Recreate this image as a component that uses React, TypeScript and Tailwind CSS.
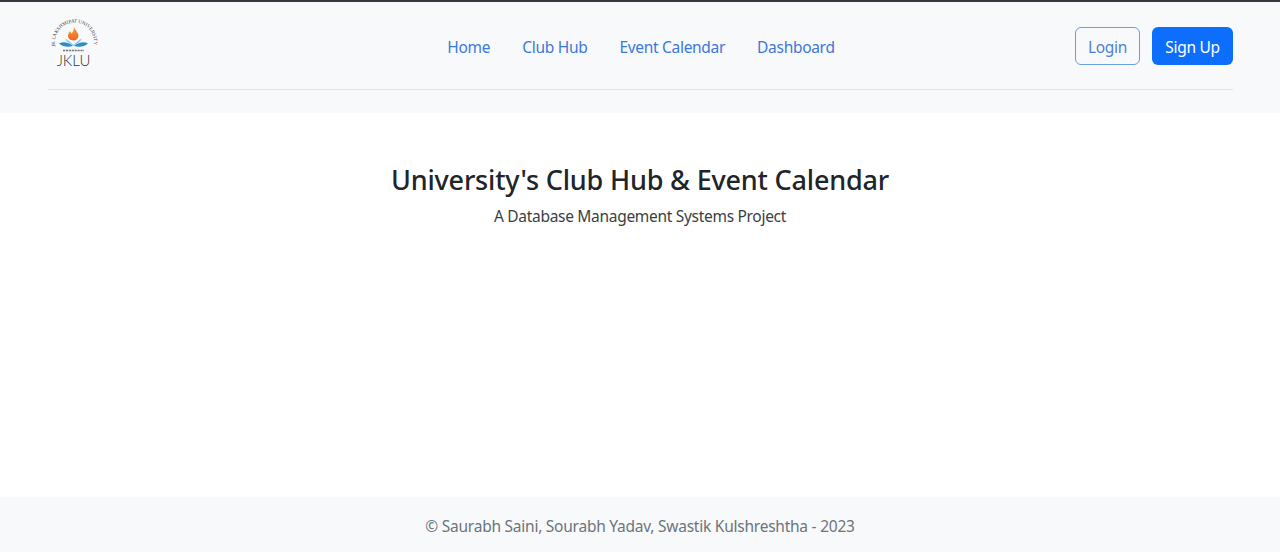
const links = ["Home", "Club Hub", "Event Calendar", "Dashboard"];

const Logo = () => (
  <svg width="50" height="54" viewBox="0 0 50 54" className="block">
    <defs>
      <path id="logo-arc" d="M7.5 30.5 A19.5 19.5 0 1 1 45.5 30.5" fill="none" />
      <linearGradient id="flame" x1="0" y1="0" x2="0" y2="1">
        <stop offset="0" stopColor="#f7a347" />
        <stop offset="1" stopColor="#e8651f" />
      </linearGradient>
    </defs>
    <text fontSize="5" fill="#444" fontFamily="'Liberation Serif', serif">
      <textPath href="#logo-arc" textLength="68">
        JK LAKSHMIPAT UNIVERSITY
      </textPath>
    </text>
    <path
      d="M26 10.5 C26.8 14 30.8 16.5 30.5 20 C30.3 22.6 28 24.5 25.5 24.5 C22.6 24.5 20 22.6 20 19.8 C20 17.8 21.2 16.8 21.8 15.2 C22.8 16 23.3 16.8 23.5 17.8 C25 15.8 26.2 13.5 26 10.5 Z"
      fill="url(#flame)"
    />
    <path d="M11 27.5 C15 25.5 20 26 25 30 C20 31.5 15 31 11 27.5 Z" fill="#2f8cc8" />
    <path d="M40 27.5 C36 25.5 31 26 26 30 C31 31.5 36 31 40 27.5 Z" fill="#2f8cc8" />
    <path
      d="M17 22.5 C20 24 23 26.5 25.5 29 C28 26.5 31 24 34 22.5 C32.5 25.5 29 28.5 25.5 30 C22 28.5 18.5 25.5 17 22.5 Z"
      fill="#86c6e8"
    />
    <path d="M15 34.5 H36" stroke="#777" strokeWidth="1.5" strokeDasharray="2.2 0.7" />
    <text
      x="25.5"
      y="50"
      textAnchor="middle"
      fontSize="15"
      fontWeight="300"
      fill="#333"
      fontFamily="Lato, sans-serif"
    >
      JKLU
    </text>
  </svg>
);

export default function App() {
  return (
    <div className="flex flex-col h-screen bg-white font-['Noto_Sans',sans-serif] text-[#212529]">
      <header className="bg-[#f8f9fa] border-t-2 border-[#343a40] pl-12 pr-[47px] pb-[23px]">
        <div className="grid grid-cols-[1fr_auto_1fr] items-center h-[88px] border-b border-[#e3e5e8]">
          <div className="pb-[5px]">
            <Logo />
          </div>
          <nav className="flex gap-8 text-[#3b78dc] text-[15.5px] tracking-[-0.3px] pt-[4px] pl-[1px]">
            {links.map((link) => (
              <a key={link} href="#">
                {link}
              </a>
            ))}
          </nav>
          <div className="flex justify-end gap-3 text-[15.5px] tracking-[-0.3px]">
            <button className="w-[65px] h-[38px] border border-[#6b9de8] rounded-md text-[#4f7fd6] pt-[4px]">
              Login
            </button>
            <button className="w-[81px] h-[38px] bg-[#0d6efd] rounded-md text-white pt-[4px]">
              Sign Up
            </button>
          </div>
        </div>
      </header>
      <main className="flex-1 flex flex-col items-center pt-[46px]">
        <h1 className="text-[27px] leading-[42px] font-medium tracking-[-0.18px]">
          University's Club Hub & Event Calendar
        </h1>
        <p className="text-[15.5px] leading-6 mt-[3px] tracking-[-0.3px] text-[#3a3f44]">
          A Database Management Systems Project
        </p>
      </main>
      <footer className="h-[55px] bg-[#f8f9fa] flex items-center justify-center pt-[4px] text-[15.5px] tracking-[-0.24px] text-[#6c757d]">
        © Saurabh Saini, Sourabh Yadav, Swastik Kulshreshtha - 2023
      </footer>
    </div>
  );
}
